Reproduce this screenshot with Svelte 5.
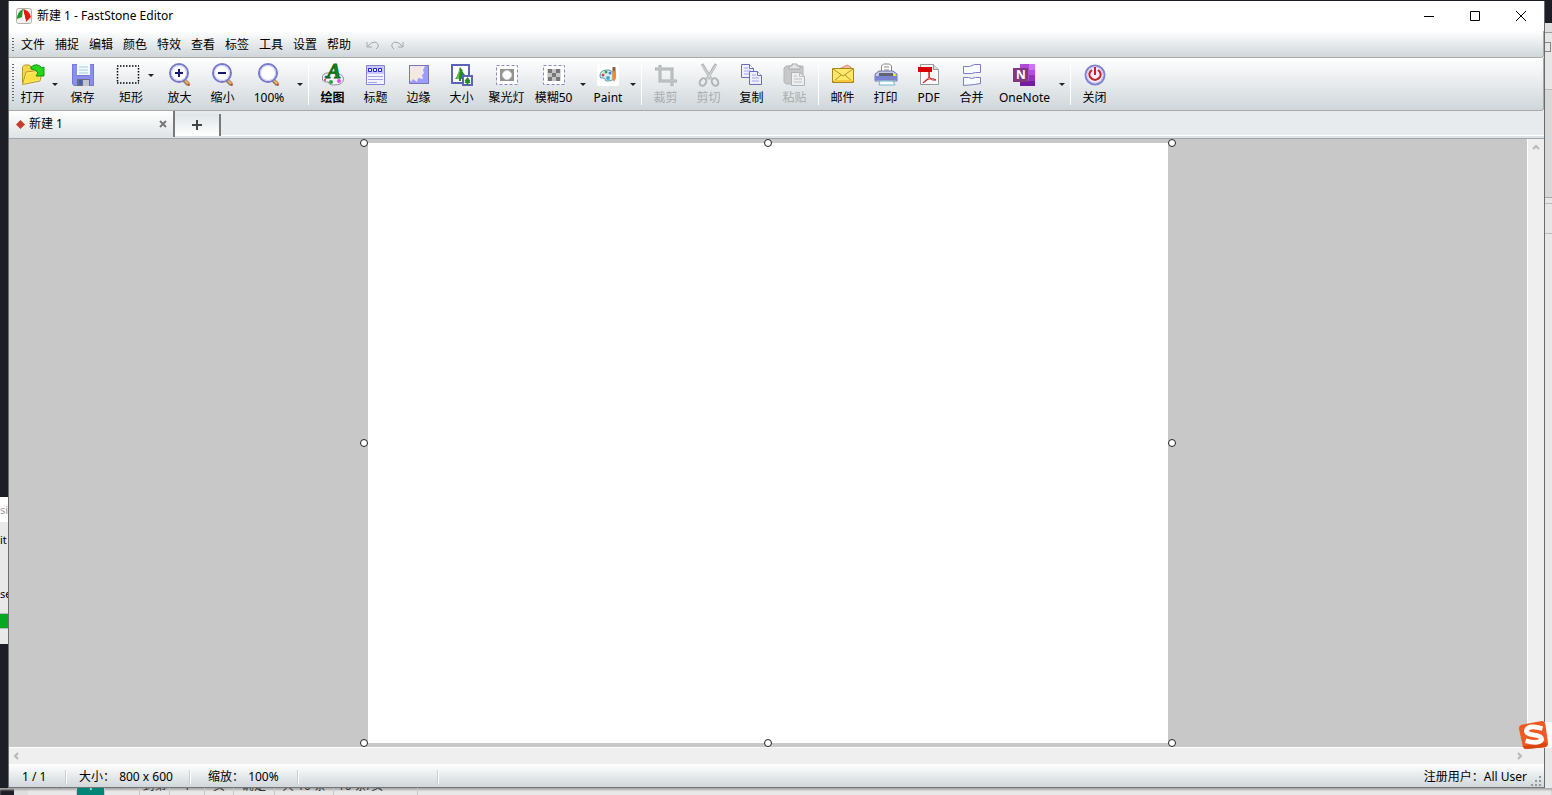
<script>
    const menus = ['文件', '捕捉', '编辑', '颜色', '特效', '查看', '标签', '工具', '设置', '帮助'];

    const lens = '<path d="M15.500 16.500l5 5" stroke="#8d7a5c" stroke-width="4"/><path d="M16 16.500l5 5" stroke="#f1b45c" stroke-width="2"/><path d="M20 21l1.500 1.500" stroke="#b8452f" stroke-width="2"/><circle cx="11" cy="10" r="9" fill="#fdfeff" stroke="#7777cc" stroke-width="2"/><circle cx="11" cy="10" r="7.500" fill="none" stroke="#c8ccf2"/>';
    const sheet = '<path d="M1.500 1.500h8l4 4v9h-12z" fill="#eef0ff" stroke="#6b6bc4"/><path d="M9.500 1.500v4h4" fill="#fff" stroke="#6b6bc4"/><path d="M4 5h4M4 8h7M4 11h7" stroke="#a5a5e8"/>';

    const icons = {
        open: '<path d="M1.500 20V4l2-2h5l2 3h7v3" fill="#f7d84c" stroke="#b9962a"/><path d="M1.500 21.500L5 9l15-2 1 2-2 9z" fill="#fff06a" stroke="#b9962a"/><path d="M3 20L6 11l14-3-2 9z" fill="#fde047"/><path d="M10 4q6-5 11 1l2-1v9h-8l2-3q-2-4-7-4z" fill="#25d51e" stroke="#159512"/>',
        save: '<path d="M1 1h22v22H3l-2-2z" fill="#7679d8"/><path d="M2 2h4v11h12V2h4v20H2z" fill="#8b8eea"/><path d="M6 1h13v11H6z" fill="#f4fbff"/><path d="M8 4h9M8 7h9M8 10h9" stroke="#a7c9d8"/><path d="M6 16h13v7H6z" fill="#697083"/><path d="M12 17h6v6h-6z" fill="#bfc6cf"/><path d="M8 17h3v5H8z" fill="#4d5db7"/>',
        rect: '<path d="M1 3h22M1 20h22M1.500 5v14M22.500 5v14" stroke="#000" stroke-width="1.500" stroke-dasharray="1.500 1.500"/>',
        zoomIn: lens + '<path d="M7 10h8M11 6v8" stroke="#171773" stroke-width="2"/>',
        zoomOut: lens + '<path d="M7 10h8" stroke="#171773" stroke-width="2"/>',
        zoom: lens,
        draw: '<path d="M1.500 13q2-4 9-3 12 0 12 6t-10 6q-5 0-5-3-5 1-6-2z" fill="#f4f1fb" stroke="#8d8da0"/><circle cx="5" cy="14" r="1.500" fill="#3864ed"/><circle cx="10" cy="19" r="2" fill="#26a63a"/><circle cx="18" cy="18" r="2" fill="#d657eb"/><circle cx="4" cy="17" r="1" fill="#e52727"/><text x="6" y="15" font-family="Liberation Serif, serif" font-size="21" font-weight="700" font-style="italic" fill="#11891d" stroke="#0b6d16">A</text>',
        caption: '<path d="M2.500 2.500h18v19h-18z" fill="#f3f2ff" stroke="#8585cf"/><path d="M3 3h17v8H3z" fill="#c9c8ff"/><path d="M4.500 5.500h3v3h-3zM9.500 5.500h3v3h-3zM14.500 5.500h3v3h-3z" fill="#eef" stroke="#2323c7"/><path d="M4 13.500h15M4 16.500h15M4 19.500h9" stroke="#a7a4e6"/>',
        edge: '<path d="M2 2h20v19H2z" fill="#9c9cff"/><path d="M3 3h15l-2 4 1 3-2 2 1 4-5-1-1 4-4-3-2 3-1-2z" fill="#f4e9e2"/><path d="M2.500 2.500h19v18h-19z" stroke="#7777b7"/>',
        size: '<path d="M2 2h17v18H2z" fill="#fff" stroke="#5d63b8" stroke-width="2"/><path d="M10 4l3 4h-1l3 4h-1l2 4h-5v2H9v-2H5l3-4H7l3-4H9z" fill="#258a25"/><path d="M10 4l-1 12H6z" fill="#65b857"/><path d="M13 13h9v9h-9z" fill="#fff" stroke="#5d63b8" stroke-width="2"/><path d="M17.500 14l3 4h-1l1 2h-2v2h-2v-2h-2l1-2h-1z" fill="#258a25"/>',
        spotlight: '<path d="M1.500 2.500h21v19h-21z" fill="#fff" stroke="#8989c3" stroke-dasharray="3 2"/><path d="M5 6h14v12H5z" fill="#929292"/><circle cx="12" cy="12" r="4.500" fill="#fff" stroke="#d7d7d7"/>',
        blur: '<path d="M1.500 2.500h21v19h-21z" fill="#fff" stroke="#8989c3" stroke-dasharray="3 2"/><path d="M5 6h14v12H5z" fill="#d9d9d9"/><path d="M6 6h4v4H6zM14 6h4v4h-4zM10 10h4v4h-4zM6 14h4v4H6zM14 14h4v4h-4z" fill="#777"/><path d="M10 6h4v4h-4zM6 10h4v4H6zM14 10h4v4h-4zM10 14h4v4h-4z" fill="#c4c4c4"/>',
        paint: '<rect x="1" y="1" width="22" height="22" rx="2" fill="#fff"/><path d="M4 13q0-6 7-6 6 0 6 4-1 2 1 3 0 4-7 4-2 0-2-2 0-1-2-1-3 1-3-2z" fill="#d9f0f8" stroke="#5a96a7"/><circle cx="7" cy="12" r="1.500" fill="#da4444"/><circle cx="10" cy="9" r="1.500" fill="#3b9a4a"/><circle cx="14" cy="10" r="1.500" fill="#4778dc"/><circle cx="12" cy="15" r="2" fill="#46aac8"/><path d="M18 4v5" stroke="#8b5c45" stroke-width="3"/><path d="M17 8h3v7l-2 4-2-4z" fill="#ee8c35"/>',
        crop: '<path d="M6 2v16h17M1 6h17v17" stroke="#adb1b3" stroke-width="3"/><path d="M6 3v15h16M2 6h16v16" stroke="#c8cbcc"/>',
        cut: '<path d="M5 1l9 15M19 1l-9 15" stroke="#b5b8ba" stroke-width="3"/><path d="M5 2l9 14M19 2l-9 14" stroke="#d8dadb"/><ellipse cx="6" cy="19" rx="3" ry="4" transform="rotate(30 6 19)" stroke="#b1b4b6" stroke-width="2"/><ellipse cx="18" cy="19" rx="3" ry="4" transform="rotate(-30 18 19)" stroke="#b1b4b6" stroke-width="2"/>',
        copy: sheet + '<g transform="translate(8 7)">' + sheet + '</g>',
        paste: '<path d="M3 3h17v18H3l-2-2V5z" fill="#c6c8c9" stroke="#b3b6b8"/><path d="M6 5V3h3V1h5v2h3v3H6z" fill="#e5e6e7" stroke="#a6a9ab"/><path d="M8.500 9.500h8l5 4v9h-13z" fill="#eee" stroke="#b1b4b6"/><path d="M16.500 9.500v4h5M11 13h3M11 16h8M11 19h8" stroke="#bec0c2"/>',
        mail: '<path d="M6 7l10-5 4 2v7z" fill="#f8b9a0" stroke="#d99273"/><path d="M1.500 5.500h21v14h-21z" fill="#ffe86a" stroke="#a98622"/><path d="M2 6l10 7L22 6M2 19l8-7M22 19l-8-7" stroke="#b69227"/><path d="M3 18h18" stroke="#f6c93d" stroke-width="2"/>',
        print: '<path d="M7.500 10V3l2-2h6l2 2v7" fill="#fff" stroke="#888"/><path d="M10 4h5M10 7h5" stroke="#888"/><path d="M1 11l4-3h14l4 3v7H1z" fill="#c6c8e9" stroke="#7378a8"/><path d="M1 13h22v4H1z" fill="#7a83d4"/><path d="M5 10h14v3H5z" fill="#60656f"/><path d="M6 18h13l2 4H5z" fill="#f5ffff" stroke="#79b6c9"/><path d="M20 12h1" stroke="#fff200" stroke-width="2"/>',
        pdf: '<path d="M3.500 1.500h13l5 5v15h-18z" fill="#fafafa" stroke="#999"/><path d="M16.500 1.500v5h5" fill="#ddd" stroke="#999"/><path d="M1 4h14v5H1z" fill="#d80000"/><path d="M12 9q1 2 0 5-2 4-6 6 1-3 6-4 5-1 7 1-4 1-6-2-2-2-1-6z" stroke="#d71920"/>',
        join: '<path d="M3.500 3.500h6l5-2h6v8h-5l-4 1h-8zM3.500 14.500h5l3 1 4-1h5v6l-6 1-11 1z" fill="#f8fbff" stroke="#7b7bca"/>',
        onenote: '<path d="M7 1h15v22H7z" fill="#b149d6"/><path d="M16 1h6v6h-6z" fill="#cf72ed"/><path d="M16 7h6v5h-6z" fill="#b54be0"/><path d="M16 12h6v6h-6z" fill="#9132b8"/><path d="M7 18h15v5H7z" fill="#791aa3"/><path d="M0 5h15v14H0z" fill="#80397b"/><text x="3" y="16" font-family="Open Sans, sans-serif" font-size="12" font-weight="700" fill="#fff">N</text>',
        power: '<circle cx="12" cy="12" r="9.500" fill="#f6edfb" stroke="#8181d0" stroke-width="2"/><circle cx="12" cy="12" r="8" stroke="#c8c8f2"/><path d="M9 7q-4 3-2 7 5 6 10 0 2-4-2-7M12 4v8" stroke="#d21b2c" stroke-width="2"/>'
    };

    const tools = [
        { icon: 'open', label: '打开', size: 'small', drop: true },
        { icon: 'save', label: '保存' },
        { icon: 'rect', label: '矩形', size: 'select', inner: true },
        { icon: 'zoomIn', label: '放大' },
        { icon: 'zoomOut', label: '缩小' },
        { icon: 'zoom', label: '100%', size: 'wide', drop: true },
        { sep: true },
        { icon: 'draw', label: '绘图', bold: true },
        { icon: 'caption', label: '标题' },
        { icon: 'edge', label: '边缘' },
        { icon: 'size', label: '大小' },
        { icon: 'spotlight', label: '聚光灯', size: 'medium' },
        { icon: 'blur', label: '模糊50', size: 'medium', drop: true },
        { icon: 'paint', label: 'Paint', size: 'compact', drop: true },
        { sep: true },
        { icon: 'crop', label: '裁剪', disabled: true },
        { icon: 'cut', label: '剪切', disabled: true },
        { icon: 'copy', label: '复制' },
        { icon: 'paste', label: '粘贴', disabled: true },
        { sep: true },
        { icon: 'mail', label: '邮件' },
        { icon: 'print', label: '打印' },
        { icon: 'pdf', label: 'PDF' },
        { icon: 'join', label: '合并' },
        { icon: 'onenote', label: 'OneNote', size: 'large', drop: true },
        { sep: true },
        { icon: 'power', label: '关闭' }
    ];

    const handles = ['nw', 'n', 'ne', 'w', 'e', 'sw', 's', 'se'];
</script>

<div class="desktop">
    <div class="left-edge">
        <div class="dialog">
            <span class="dialog-title">si</span>
            <span class="dialog-text">it</span>
            <span class="dialog-text next">se</span>
            <span class="progress"></span>
        </div>
    </div>

    <main class="window">
        <header class="title-bar">
            <svg class="logo" viewBox="0 0 16 16" aria-hidden="true">
                <rect x="0.5" y="0.5" width="15" height="15" rx="2" fill="#f3f1ee" stroke="#b4b0ac" />
                <path d="M7 1L6 9l-5 2q0-7 6-10z" fill="#1d982e" />
                <path d="M7 1q6 1 8 8l-5 5z" fill="#df1c14" />
                <path d="M7 1l3 13-3-3z" fill="#fff" />
            </svg>
            <h1>新建 1 - FastStone Editor</h1>
            <div class="window-buttons">
                <button aria-label="最小化"><svg viewBox="0 0 12 12"><path d="M1 6.5h10" /></svg></button>
                <button aria-label="最大化"><svg viewBox="0 0 12 12"><path d="M1.5 1.5h9v9h-9z" /></svg></button>
                <button aria-label="关闭"><svg viewBox="0 0 12 12"><path d="M1 1l10 10M11 1L1 11" /></svg></button>
            </div>
        </header>

        <nav class="menu-bar">
            <span class="grip"></span>
            {#each menus as menu}
                <button class="menu">{menu}</button>
            {/each}
            <button class="history first" aria-label="撤销">
                <svg viewBox="0 0 14 12"><path d="M1 3v5h5M2 7q3-4 7-4 4 1 3 5l-2 2" /></svg>
            </button>
            <button class="history" aria-label="重做">
                <svg viewBox="0 0 14 12"><path d="M13 3v5H8M12 7Q9 3 5 3 1 4 2 8l2 2" /></svg>
            </button>
        </nav>

        <div class="toolbar">
            <span class="grip"></span>
            {#each tools as tool}
                {#if tool.sep}
                    <span class="separator"></span>
                {:else}
                    <button class="tool {tool.size}" class:bold={tool.bold} disabled={tool.disabled}>
                        <span class="icon-row">
                            <svg viewBox="0 0 24 24" fill="none" aria-hidden="true">{@html icons[tool.icon]}</svg>
                            {#if tool.inner}<span class="triangle"></span>{/if}
                        </span>
                        <span class="label">{tool.label}</span>
                    </button>
                    {#if tool.drop}
                        <button class="drop" aria-label="{tool.label}选项"><span class="triangle"></span></button>
                    {/if}
                {/if}
            {/each}
        </div>

        <div class="tabs">
            <div class="tab">
                <svg class="diamond" viewBox="0 0 9 9"><path d="M4.5 0L9 4.500 4.500 9 0 4.500z" /></svg>
                <button class="tab-name">新建 1</button>
                <button class="tab-close" aria-label="关闭标签">
                    <svg viewBox="0 0 8 8"><path d="M1 1l6 6M7 1L1 7" /></svg>
                </button>
            </div>
            <button class="new-tab" aria-label="新建标签">
                <svg viewBox="0 0 10 10"><path d="M0 5h10M5 0v10" /></svg>
            </button>
        </div>

        <section class="workspace">
            <div class="canvas">
                {#each handles as handle}
                    <span class="handle {handle}"></span>
                {/each}
            </div>
        </section>
        <div class="scroll-y">
            <svg viewBox="0 0 8 8"><path d="M1 5l3-3 3 3" /></svg>
        </div>
        <div class="scroll-x">
            <svg viewBox="0 0 8 8"><path d="M5 1L2 4l3 3" /></svg>
            <svg viewBox="0 0 8 8"><path d="M3 1l3 3-3 3" /></svg>
        </div>

        <footer class="status-bar">
            <span class="status page">1 / 1</span>
            <span class="status dimensions">大小： <span>800 x 600</span></span>
            <span class="status scale">缩放： <span>100%</span></span>
            <span class="status spare"></span>
            <span class="user">注册用户：All User</span>
            <svg class="resize" viewBox="0 0 12 12">
                <path d="M9 1h2v2H9zM5 5h2v2H5zM9 5h2v2H9zM1 9h2v2H1zM5 9h2v2H5zM9 9h2v2H9z" />
            </svg>
        </footer>
    </main>

    <div class="right-edge">
        <span class="edge-head"></span>
        <span class="edge-box"></span>
        <span class="edge-body"></span>
        <span class="edge-row"></span>
    </div>

    <div class="bottom-edge">
        <span class="pager arrow">‹</span>
        <span class="pager current">1</span>
        <span class="pager arrow">›</span>
        <span class="pager goto">到第</span>
        <span class="pager number">1</span>
        <span class="pager unit">页</span>
        <span class="pager confirm">确定</span>
        <span class="pager total">共 10 条</span>
        <span class="pager limit">10 条/页</span>
    </div>

    <div class="ime">
        <svg viewBox="0 0 34 32" aria-hidden="true">
            <path d="M4 5L25 1q3 0 4 3l3 21q0 3-3 4L9 31q-3 0-4-3L1 9q0-3 3-4z" fill="#f05a22" />
            <path d="M5 28l24-4 2 2q0 2-3 3L9 31q-3 0-4-3z" fill="#d94410" />
            <path d="M26 9Q11 5 9 11q-1 4 8 5 9 1 8 5-3 5-17 1" fill="none" stroke="#fff" stroke-width="5" />
        </svg>
    </div>
</div>

<style>
    :global(body) {
        margin: 0;
        background: #1e1e26;
    }

    .desktop {
        position: relative;
        display: grid;
        grid-template-columns: 8px minmax(0, 1fr) 8px;
        grid-template-rows: minmax(0, 1fr) 7px;
        box-sizing: border-box;
        height: 100vh;
        padding-top: 1px;
        overflow: hidden;
        color: #000;
        font: 12px/18px "Noto Sans", "Noto Sans CJK SC", sans-serif;
    }

    button {
        padding: 0;
        border: 0;
        background: none;
        color: inherit;
        font: inherit;
        white-space: nowrap;
    }

    svg {
        display: block;
        flex: none;
    }

    .left-edge {
        display: flex;
        flex-direction: column;
        justify-content: flex-end;
        padding-bottom: 144px;
        overflow: hidden;
    }

    .dialog {
        display: flex;
        flex-direction: column;
        height: 147px;
        background: #e9e9e9;
        font-size: 11px;
    }

    .dialog-title {
        height: 25px;
        line-height: 25px;
        background: #fff;
        color: #999;
    }

    .dialog-text {
        margin-top: 9px;
    }

    .dialog-text.next {
        margin-top: 36px;
    }

    .progress {
        height: 14px;
        margin-top: 10px;
        background: #06a721;
        border-top: 1px solid #bbb;
        border-bottom: 1px solid #bbb;
    }

    .window {
        display: grid;
        grid-template-columns: minmax(0, 1fr) 17px;
        grid-template-rows: 30px 27px 53px 28px minmax(0, 1fr) 17px 23px;
        border-left: 1px solid #6d6e70;
        border-bottom: 1px solid #737577;
        background: #fff;
    }

    .title-bar,
    .menu-bar,
    .toolbar,
    .tabs,
    .scroll-x,
    .status-bar {
        display: flex;
        grid-column: 1 / -1;
        box-sizing: border-box;
    }

    .title-bar {
        align-items: center;
        padding-left: 7px;
    }

    .logo {
        width: 16px;
        height: 16px;
    }

    h1 {
        margin: 0 auto 0 5px;
        font-size: 12px;
        font-weight: 400;
    }

    .window-buttons {
        display: flex;
    }

    .window-buttons button {
        display: flex;
        align-items: center;
        justify-content: center;
        width: 46px;
        height: 28px;
    }

    .window-buttons svg {
        width: 12px;
        height: 12px;
        fill: none;
        stroke: #000;
    }

    .menu-bar {
        align-items: center;
        gap: 10px;
        padding: 2px 0 0 3px;
        border-right: 1px solid #aaa;
        border-bottom: 1px solid #aaa;
        border-radius: 0 0 3px 0;
        background: linear-gradient(#fff, #cfd6da);
    }

    .grip {
        flex: none;
        width: 2px;
        height: 14px;
        background: repeating-linear-gradient(#666 0 1px, transparent 1px 3px);
    }

    .menu {
        width: 24px;
    }

    .menu-bar .grip {
        margin-right: -3px;
    }

    .history {
        width: 14px;
    }

    .history.first {
        margin-left: 5px;
    }

    .history svg {
        width: 14px;
        height: 12px;
        fill: none;
        stroke: #a2a6a8;
    }

    .toolbar {
        align-items: flex-start;
        padding: 5px 0 0 3px;
        border-right: 1px solid #aaa;
        border-bottom: 1px solid #aaa;
        border-radius: 0 0 3px 0;
        background: linear-gradient(#fff, #cfd6da);
    }

    .toolbar .grip {
        height: 39px;
        margin-top: 1px;
        margin-right: 2px;
    }

    .tool {
        flex: none;
        width: 43px;
    }

    .tool.small {
        width: 33px;
    }

    .tool.compact {
        width: 38px;
    }

    .tool.medium {
        width: 47px;
    }

    .tool.wide {
        width: 50px;
    }

    .tool.select {
        width: 54px;
    }

    .tool.large {
        width: 63px;
    }

    .tool.bold {
        font-weight: 700;
    }

    .tool:disabled {
        color: #aaadaf;
    }

    .icon-row {
        display: flex;
        align-items: center;
        justify-content: center;
        height: 24px;
    }

    .icon-row svg {
        width: 24px;
        height: 24px;
    }

    .select .icon-row {
        padding-left: 8px;
    }

    .icon-row .triangle {
        margin-left: 8px;
    }

    .label {
        display: block;
        padding-top: 2px;
    }

    .triangle {
        width: 0;
        border: 3px solid transparent;
        border-top-color: #222;
        border-bottom: 0;
    }

    .drop {
        display: flex;
        align-items: center;
        justify-content: center;
        width: 12px;
        height: 42px;
    }

    .separator {
        box-sizing: border-box;
        width: 5px;
        height: 41px;
        margin-top: 1px;
        border: solid transparent;
        border-width: 0 2px;
        background: #fff;
        background-clip: padding-box;
    }

    .tabs {
        padding-bottom: 1px;
        border-bottom: 1px solid #a2a4a5;
        background: linear-gradient(#e7ebee 24px, #fff 24px 25px, #dfe3e5 25px);
    }

    .tab {
        display: flex;
        align-items: center;
        box-sizing: border-box;
        width: 166px;
        padding: 0 6px 0 7px;
        border-right: 2px solid #77797b;
        background: linear-gradient(#fff, #dfe4e6);
    }

    .diamond {
        width: 9px;
        height: 9px;
        fill: #c53b2c;
    }

    .tab-name {
        margin: 0 auto 0 4px;
    }

    .tab-close svg {
        width: 8px;
        height: 8px;
        stroke: #777;
        stroke-width: 2;
    }

    .new-tab {
        display: flex;
        align-items: center;
        justify-content: center;
        box-sizing: border-box;
        width: 46px;
        height: 22px;
        margin-top: 3px;
        border-right: 2px solid #77797b;
        background: linear-gradient(#dfe5e8, #fff);
    }

    .new-tab svg {
        width: 10px;
        height: 10px;
        stroke: #444;
        stroke-width: 2;
    }

    .workspace {
        display: flex;
        align-items: center;
        justify-content: center;
        overflow: hidden;
        background: #c8c8c8;
    }

    .canvas {
        position: relative;
        flex: none;
        width: 800px;
        height: 600px;
        background: #fff;
    }

    .handle {
        position: absolute;
        box-sizing: border-box;
        width: 8px;
        height: 8px;
        border: 1px solid #222;
        border-radius: 50%;
        background: #fff;
    }

    .nw, .w, .sw {
        left: -8px;
    }

    .ne, .e, .se {
        right: -8px;
    }

    .n, .s {
        left: calc(50% - 4px);
    }

    .nw, .n, .ne {
        top: -4px;
    }

    .w, .e {
        top: calc(50% - 4px);
    }

    .sw, .s, .se {
        bottom: -4px;
    }

    .scroll-y {
        display: flex;
        justify-content: center;
        padding-top: 5px;
        border-left: 1px solid #fff;
        background: #efefef;
    }

    .scroll-x {
        align-items: center;
        justify-content: space-between;
        padding: 0 21px 0 4px;
        border-top: 1px solid #fff;
        background: #efefef;
    }

    .scroll-x svg,
    .scroll-y svg {
        width: 8px;
        height: 8px;
        fill: none;
        stroke: #b8b8b8;
        stroke-width: 2;
    }

    .status-bar {
        align-items: center;
        padding-top: 2px;
        background: linear-gradient(#fff, #d0d7db);
    }

    .status {
        box-sizing: border-box;
        height: 14px;
        line-height: 14px;
        padding-left: 13px;
        border-right: 1px solid #c9cdd0;
        box-shadow: 1px 0 #fff;
        white-space: nowrap;
    }

    .status span {
        margin-left: 1px;
    }

    .page {
        width: 57px;
    }

    .dimensions {
        width: 124px;
    }

    .scale {
        width: 108px;
        padding-left: 18px;
    }

    .spare {
        width: 140px;
    }

    .user {
        margin-left: auto;
    }

    .resize {
        align-self: flex-end;
        width: 12px;
        height: 12px;
        margin: 0 2px 0 3px;
        fill: #92989c;
    }

    .right-edge {
        display: flex;
        flex-direction: column;
        padding-top: 22px;
        border-left: 1px solid #686a6c;
        overflow: hidden;
        box-sizing: border-box;
    }

    .edge-head {
        height: 9px;
        background: #dedede;
        border-bottom: 1px solid #999;
    }

    .edge-box {
        box-sizing: border-box;
        height: 57px;
        padding: 9px 1px 0 0;
        background: #e6e6e6;
        border-bottom: 1px solid #bbb;
    }

    .edge-box::before {
        display: block;
        box-sizing: border-box;
        width: 6px;
        height: 10px;
        border: 1px solid #888;
        border-left: 0;
        content: "";
    }

    .edge-body {
        height: 107px;
        background: #d8d8d8;
        border-bottom: 1px solid #aaa;
    }

    .edge-row {
        flex: 1;
        background: linear-gradient(#e6e6e6 5px, #bbb 5px 6px, #e6e6e6 6px 35px, #bbb 35px 36px, #e8e8e8 36px);
    }

    .bottom-edge {
        display: flex;
        grid-column: 1 / -1;
        padding-left: 42px;
        overflow: hidden;
        background: linear-gradient(90deg, #1e1e26 14px, #dedede 14px 28px, #e8e8e8 28px);
        box-shadow: inset 0 2px 2px #aaa;
    }

    .pager {
        box-sizing: border-box;
        height: 18px;
        margin-top: -11px;
        border-right: 1px solid #c7c7c7;
        color: #333;
        text-align: center;
        white-space: nowrap;
    }

    .arrow {
        width: 35px;
        color: #999;
    }

    .current {
        width: 28px;
        background: #008577;
        color: #fff;
    }

    .goto {
        width: 30px;
    }

    .number {
        width: 35px;
    }

    .unit {
        width: 29px;
    }

    .confirm {
        width: 41px;
    }

    .total {
        width: 59px;
    }

    .limit {
        width: 84px;
        padding-right: 30px;
    }

    .ime {
        position: absolute;
        right: 0;
        bottom: 44px;
        width: 34px;
        height: 32px;
        background: linear-gradient(#fff, #fff) right center / 8px 26px no-repeat;
    }

    .ime svg {
        width: 32px;
        height: 32px;
    }
</style>
